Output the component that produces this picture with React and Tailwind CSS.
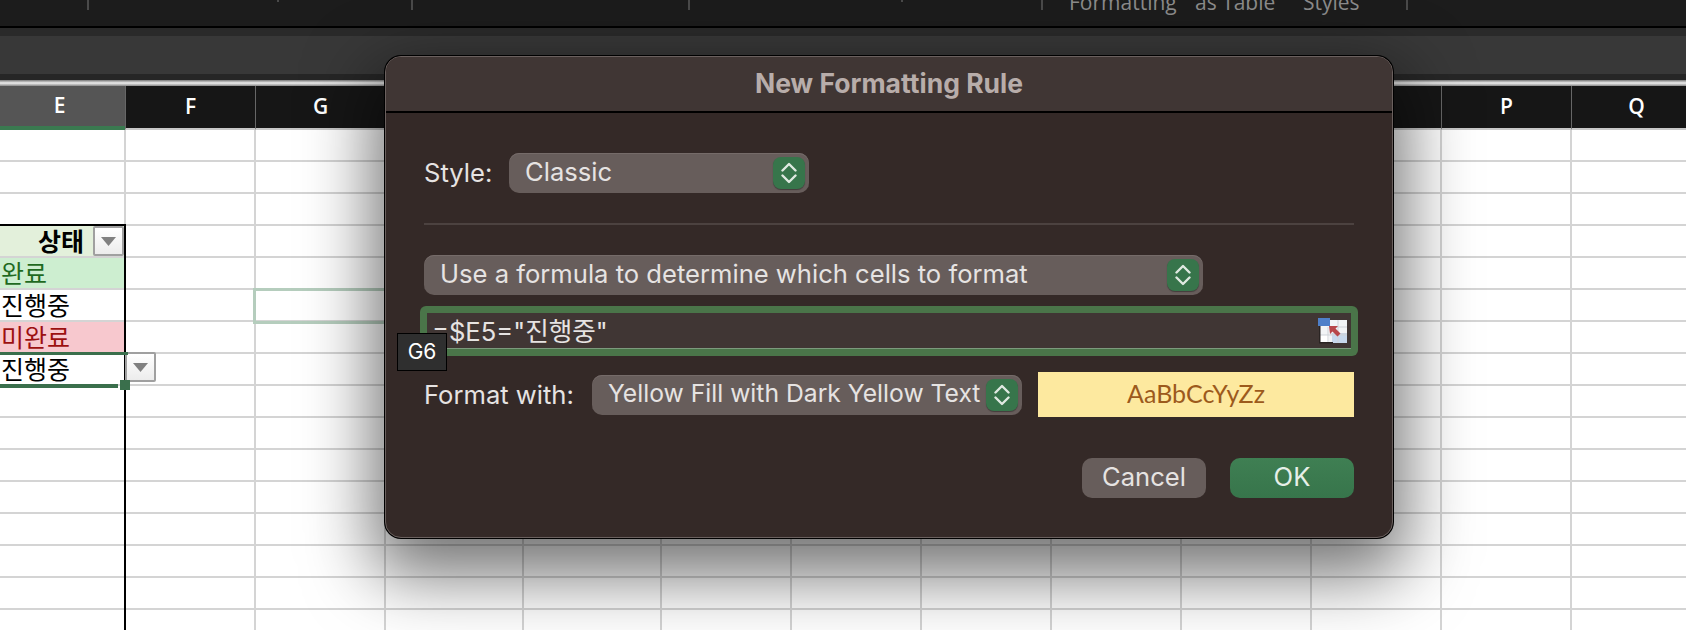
const COLUMNS = ["E", "F", "G", "H", "I", "J", "K", "L", "M", "N", "O", "P", "Q"];

const FIRST_COL_CELLS = {
  3: { text: "상태", className: "bg-[#e3f0db] text-black font-bold justify-end pr-[40px]" },
  4: { text: "완료", className: "bg-[#cdeed0] text-[#1f6a1f]" },
  5: { text: "진행중", className: "bg-white text-black" },
  6: { text: "미완료", className: "bg-[#f7c8ce] text-[#9c1010]" },
  7: { text: "진행중", className: "bg-white text-black" },
};

function FilterArrow({ className }) {
  return (
    <div className={`absolute w-[31px] h-[30px] flex items-center justify-center border-2 border-[#a0a0a0] rounded-[2px] bg-linear-to-b from-white to-[#ececec] ${className}`}>
      <svg width="17" height="11" viewBox="0 0 17 11">
        <polygon points="1,1 16,1 8.5,10" fill="#808080" />
      </svg>
    </div>
  );
}

function Stepper() {
  return (
    <div className="w-8 h-8 rounded-[8px] bg-[#37754b] flex items-center justify-center shadow-[0_1px_1px_rgba(0,0,0,0.35)]">
      <svg width="16" height="24" viewBox="0 0 16 24" fill="none" stroke="#dfe9e1" strokeWidth="2.4" strokeLinecap="round" strokeLinejoin="round">
        <path d="M1.5 9.5 8 3l6.5 6.5" />
        <path d="M1.5 14.5 8 21l6.5-6.5" />
      </svg>
    </div>
  );
}

function Popup({ label, className }) {
  return (
    <div className={`h-10 rounded-[10px] bg-[#675d5b] shadow-[inset_0_1px_0_#756b69] flex items-center justify-between pl-[16px] pr-[4px] text-[#e6e3e2] ${className}`}>
      <span className="-mt-[1px] whitespace-nowrap">{label}</span>
      <Stepper />
    </div>
  );
}

function RangeIcon() {
  return (
    <svg width="30" height="26" viewBox="0 0 30 26" className="shrink-0">
      <rect x="1" y="2" width="28" height="23" fill="#f2f4f6" />
      <rect x="1" y="17" width="10" height="8" fill="#ffffff" />
      <rect x="14" y="15" width="15" height="10" fill="#c7d8ec" />
      <path d="M12 9h17M12 16h17M1 17h28M10 9v16M20 2v23" stroke="#cfd3d8" strokeWidth="1" fill="none" />
      <rect x="0" y="0" width="12" height="8" fill="#4e7fc9" />
      <path d="M11 8h9l-2.5 2.5 5 5-3 3-5-5L12 16z" fill="#b8474a" />
      <rect x="1" y="8" width="1.5" height="17" fill="#2a2423" />
      <rect x="1" y="24" width="14" height="1.5" fill="#2a2423" />
    </svg>
  );
}

export default function App() {
  return (
    <div className="relative w-[1686px] h-[630px] overflow-hidden bg-white" style={{ fontFamily: "Inter, 'Noto Sans CJK KR', sans-serif" }}>
      {/* ribbon, cut off at the top */}
      <div className="relative h-[26px] bg-[#1c1c1c] overflow-hidden flex">
        <div className="w-[89px] h-[10px] border-r-2 border-[#4a4a4a]" />
        <div className="w-[190px] h-[2px] border-r-2 border-[#4a4a4a]" />
        <div className="w-[134px] h-[10px] border-r-2 border-[#4a4a4a]" />
        <div className="w-[277px] h-[10px] border-r-2 border-[#4a4a4a]" />
        <div className="w-[213px] h-[2px] border-r-2 border-[#4a4a4a]" />
        <div className="w-[140px] h-[10px] border-r-2 border-[#4a4a4a]" />
        <div className="w-[26px]" />
        <div className="-mt-[10px] w-[337px] flex text-[21px] leading-[24px] text-[#8b8b8b] whitespace-nowrap" style={{ fontFamily: "'Open Sans', sans-serif" }}>
          <span className="w-[126px]">Formatting</span>
          <span className="w-[108px]">as Table</span>
          <span className="w-[71px]">Styles</span>
        </div>
        <div className="h-[10px] border-r-2 border-[#4a4a4a]" />
      </div>
      <div className="h-[2px] bg-black" />
      <div className="h-2 bg-[#2a2a2a]" />
      <div className="h-[38px] bg-[#383838]" />
      <div className="h-[6px] bg-[#262626]" />
      <div className="h-[6px] bg-linear-to-b from-[#777777] via-[#f0f0f0] to-[#8a8a8a]" />

      {/* sheet */}
      <div className="relative">
        <div className="grid grid-cols-[125px_130px_130px_138px_138px_130px_130px_130px_130px_130px_130px_130px_130px] h-[44px]">
          {COLUMNS.map((col, i) => (
            <div
              key={col}
              className={`flex items-center justify-center text-[21px] text-white font-semibold ${
                i === 0 ? "bg-[#555555] border-b-4 border-[#3a7a50] pr-[6px]" : "bg-[#161616] border-l border-b-2 border-l-[#666666] border-b-[#c8c8c8]"
              }`}
              style={{ fontFamily: "'Open Sans', sans-serif" }}
            >
              {col}
            </div>
          ))}
        </div>

        {Array.from({ length: 16 }).map((_, r) => (
          <div key={r} className="grid grid-cols-[126px_130px_130px_138px_138px_130px_130px_130px_130px_130px_130px_130px_130px] h-8">
            {COLUMNS.map((col, c) => {
              const special = c === 0 ? FIRST_COL_CELLS[r] : null;
              return (
                <div
                  key={col}
                  className={`flex items-center text-[25px] leading-none pl-[1px] border-b-2 border-b-[#d4d4d4] border-r-2 border-r-[#d4d4d4] ${special ? special.className : "bg-white"}`}
                  style={{ fontFamily: "'Noto Sans CJK KR', sans-serif" }}
                >
                  {special ? <span className="-mt-[2px]">{special.text}</span> : null}
                </div>
              );
            })}
          </div>
        ))}

        {/* table outline, filter buttons and selection on top of the cells */}
        <div className="absolute left-0 top-[138px] w-[126px] h-[2px] bg-black" />
        <div className="absolute left-[124px] top-[138px] w-[2px] h-[420px] bg-black" />
        <FilterArrow className="left-[93px] top-[140px]" />
        <FilterArrow className="left-[125px] top-[266px]" />
        <div className="absolute left-0 top-[266px] w-[128px] h-[3px] bg-[#3a6f4c]" />
        <div className="absolute left-0 top-[298px] w-[118px] h-1 bg-[#3a6f4c]" />
        <div className="absolute left-[120px] top-[294px] w-[10px] h-[10px] bg-[#3a6f4c]" />
        <div className="absolute left-[253px] top-[202px] w-[140px] h-[36px] border-[3px] border-[#b5cdbd]" />
      </div>

      <div className="absolute left-[385px] top-[56px] w-[1008px] h-[482px] rounded-[16px] bg-[#342927] border border-[#6a605e] shadow-[0_0_0_1px_#000000,0_26px_68px_12px_rgba(0,0,0,0.55)] flex flex-col overflow-hidden">
        <div className="h-[56px] shrink-0 bg-[#403634] border-b-2 border-black flex items-center justify-center text-[26.5px] font-bold text-[#b8adaa]">
          New Formatting Rule
        </div>
        <div className="pl-[38px] pr-[38px] flex flex-col text-[25.6px] text-[#e6e3e2]">
          <div className="mt-[40px] flex items-center">
            <span className="w-[85px] mt-[1px]">Style:</span>
            <Popup label="Classic" className="w-[300px]" />
          </div>
          <div className="mt-[30px] h-[2px] bg-[#4c4240]" />
          <Popup label="Use a formula to determine which cells to format" className="mt-[30px] w-[779px]" />
          <div className="mt-[11px] -ml-[4px] -mr-[4px] h-[50px] rounded-[6px] bg-[#4a7549] p-[7px]">
            <div className="h-full bg-[#403634] border-b border-[#7c9a7d] flex items-center justify-between pl-[5px] pr-[3px]">
              <span className="mt-[3px] whitespace-nowrap">=$E5="진행중"</span>
              <RangeIcon />
            </div>
          </div>
          <div className="mt-[16px] flex items-center h-[45px]">
            <span className="w-[168px] mt-[1px] whitespace-nowrap">Format with:</span>
            <Popup label="Yellow Fill with Dark Yellow Text" className="w-[430px] text-[24.7px]" />
            <div className="ml-[16px] flex-1 h-full bg-[#fde99f] flex items-center justify-center text-[25px] text-[#9c5a1c] pb-[2px]" style={{ fontFamily: "Lato, sans-serif" }}>
              AaBbCcYyZz
            </div>
          </div>
          <div className="mt-[41px] flex justify-end gap-6">
            <button className="w-[124px] h-10 rounded-[10px] bg-[#675d5b] text-[#e6e3e2] pb-[2px]">Cancel</button>
            <button className="w-[124px] h-10 rounded-[10px] bg-linear-to-b from-[#3f7f53] to-[#37754b] text-[#e6efe8] pb-[2px]">OK</button>
          </div>
        </div>
      </div>

      {/* cell name tooltip */}
      <div className="absolute left-[397px] top-[333px] w-[50px] h-[38px] bg-[#2f2f2f] border border-black flex items-center justify-center text-[21px] text-white">
        G6
      </div>
    </div>
  );
}
